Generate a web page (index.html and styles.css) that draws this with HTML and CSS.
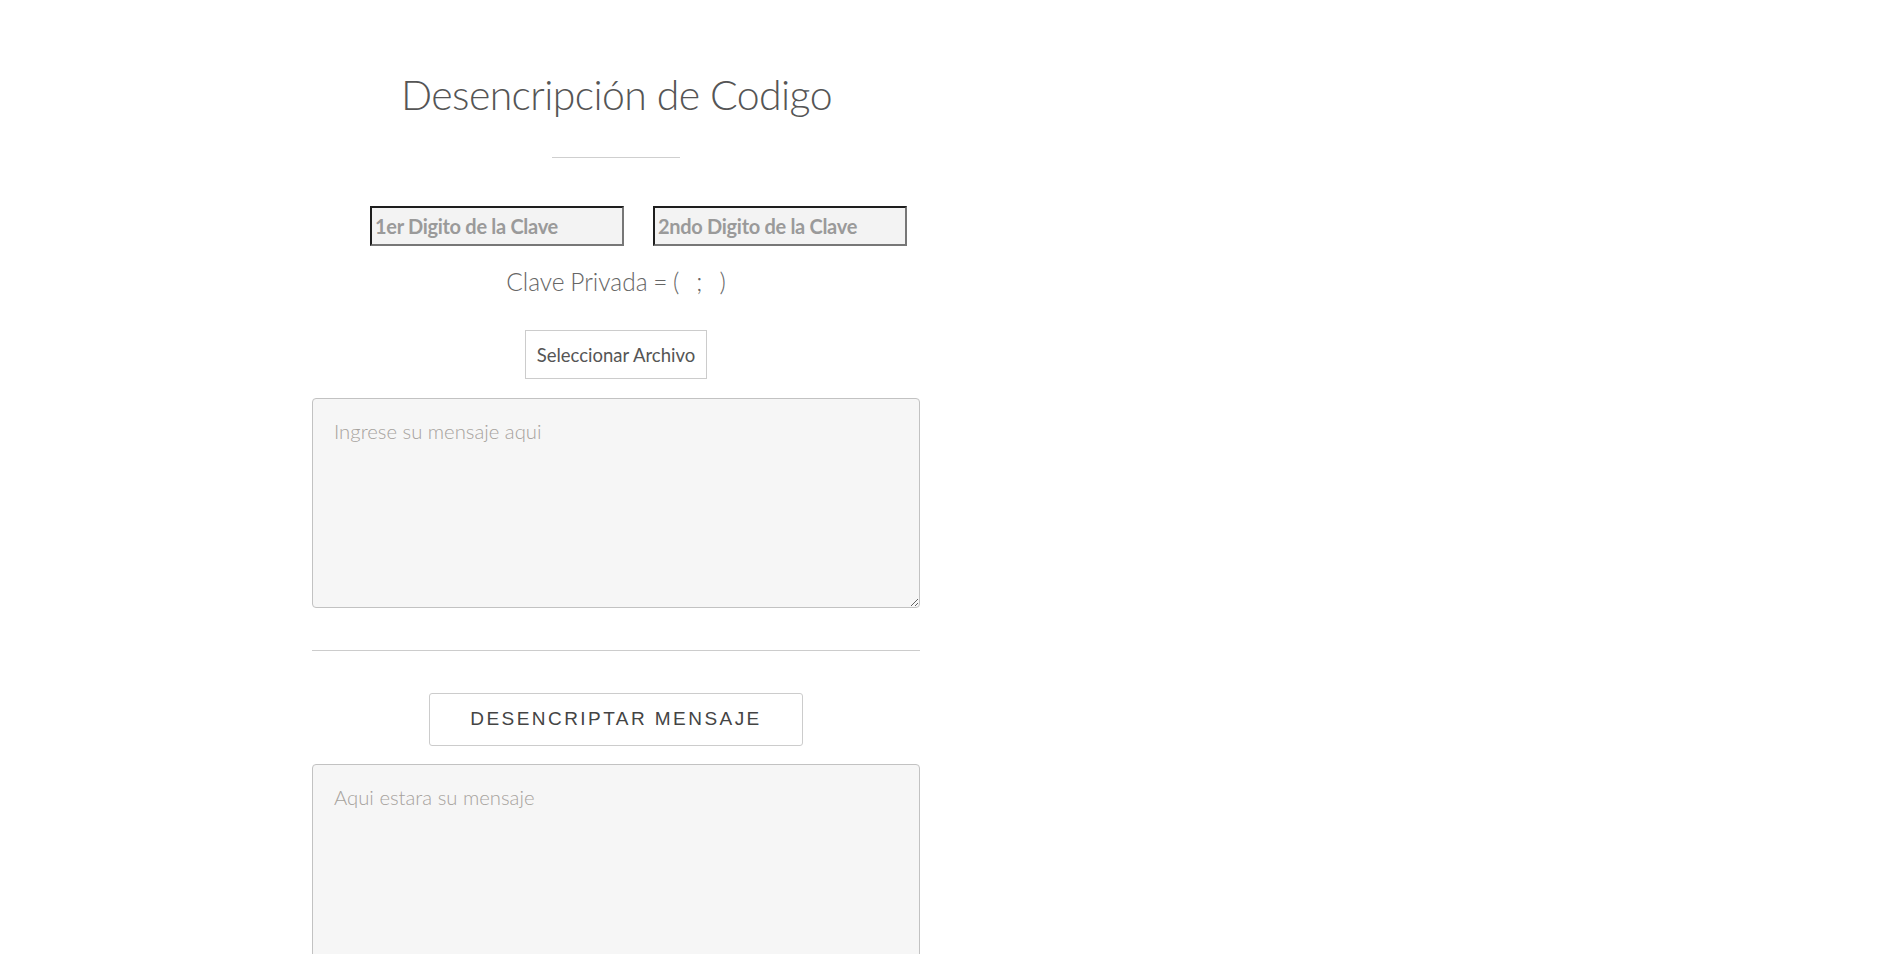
FILE: index.html
```html
<!DOCTYPE html>
<html lang="es">
<head>
<meta charset="utf-8">
<title>Desencripción de Codigo</title>
<link rel="stylesheet" href="styles.css">
</head>
<body>
<main class="panel">
  <h1 class="title">Desencripción de Codigo</h1>
  <div class="title-rule"></div>
  <div class="key-row">
    <input class="key-input" type="text" placeholder="1er Digito de la Clave">
    <input class="key-input" type="text" placeholder="2ndo Digito de la Clave">
  </div>
  <p class="private-key">Clave Privada = (&nbsp;&nbsp;&nbsp;;&nbsp;&nbsp;&nbsp;)</p>
  <button class="file-btn" type="button">Seleccionar Archivo</button>
  <textarea class="msg-box" placeholder="Ingrese su mensaje aqui"></textarea>
  <hr class="divider">
  <button class="action-btn" type="button">DESENCRIPTAR MENSAJE</button>
  <textarea class="msg-box out-box" placeholder="Aqui estara su mensaje"></textarea>
</main>
</body>
</html>
```
FILE: styles.css
```css
html, body {
  margin: 0;
  padding: 0;
  background: #ffffff;
}

body {
  font-family: "Lato", "Open Sans", sans-serif;
  color: #555;
}

.panel {
  width: 608px;
  margin-left: 312px;
  display: flex;
  flex-direction: column;
  align-items: center;
  padding-top: 70px;
}

.title {
  margin: 0;
  font-size: 41px;
  font-weight: 300;
  line-height: 50px;
  color: #555;
  letter-spacing: -0.6px;
  padding-left: 1px;
}

.title-rule {
  width: 128px;
  height: 1px;
  background: #cfcfcf;
  margin-top: 37px;
}

.key-row {
  display: flex;
  gap: 29px;
  margin-top: 48px;
  padding-left: 45px;
}

.key-input {
  box-sizing: border-box;
  width: 254px;
  height: 40px;
  margin: 0;
  padding: 0 3px;
  border-style: solid;
  border-width: 2px;
  border-color: #1e1e1e #777 #777 #1e1e1e;
  background: #f3f3f3;
  font-family: "Lato", "Open Sans", sans-serif;
  font-size: 20px;
  font-weight: 700;
  letter-spacing: -0.3px;
  color: #777;
  outline: none;
}

.key-input::placeholder {
  color: #9a9a9a;
  opacity: 1;
}

.private-key {
  margin: 20px 0 0;
  font-size: 24.5px;
  font-weight: 300;
  line-height: 31px;
  color: #666;
  word-spacing: -1px;
}

.file-btn {
  margin-top: 33px;
  height: 49px;
  padding: 0 11px;
  border: 1px solid #cccccc;
  background: #ffffff;
  font-family: "Lato", "Open Sans", sans-serif;
  font-size: 18.5px;
  font-weight: 400;
  color: #555;
}

.msg-box {
  box-sizing: border-box;
  align-self: stretch;
  width: 100%;
  height: 210px;
  margin: 19px 0 0;
  padding: 20px 21px;
  border: 1px solid #c2c2c2;
  border-radius: 4px;
  background: #f6f6f6;
  font-family: "Lato", "Open Sans", sans-serif;
  font-size: 20.3px;
  font-weight: 300;
  color: #555;
  outline: none;
}

.msg-box::placeholder {
  color: #a6a29d;
  opacity: 1;
}

.divider {
  align-self: stretch;
  margin: 42px 0 0;
  border: 0;
  border-top: 1px solid #cccccc;
}

.action-btn {
  box-sizing: border-box;
  margin-top: 42px;
  width: 374px;
  height: 53px;
  padding-bottom: 2px;
  border: 1px solid #cccccc;
  border-radius: 3px;
  background: #ffffff;
  font-family: "Liberation Sans", Arial, sans-serif;
  font-size: 19px;
  letter-spacing: 2.45px;
  color: #444;
}

.out-box {
  margin-top: 18px;
  height: 260px;
}
```
